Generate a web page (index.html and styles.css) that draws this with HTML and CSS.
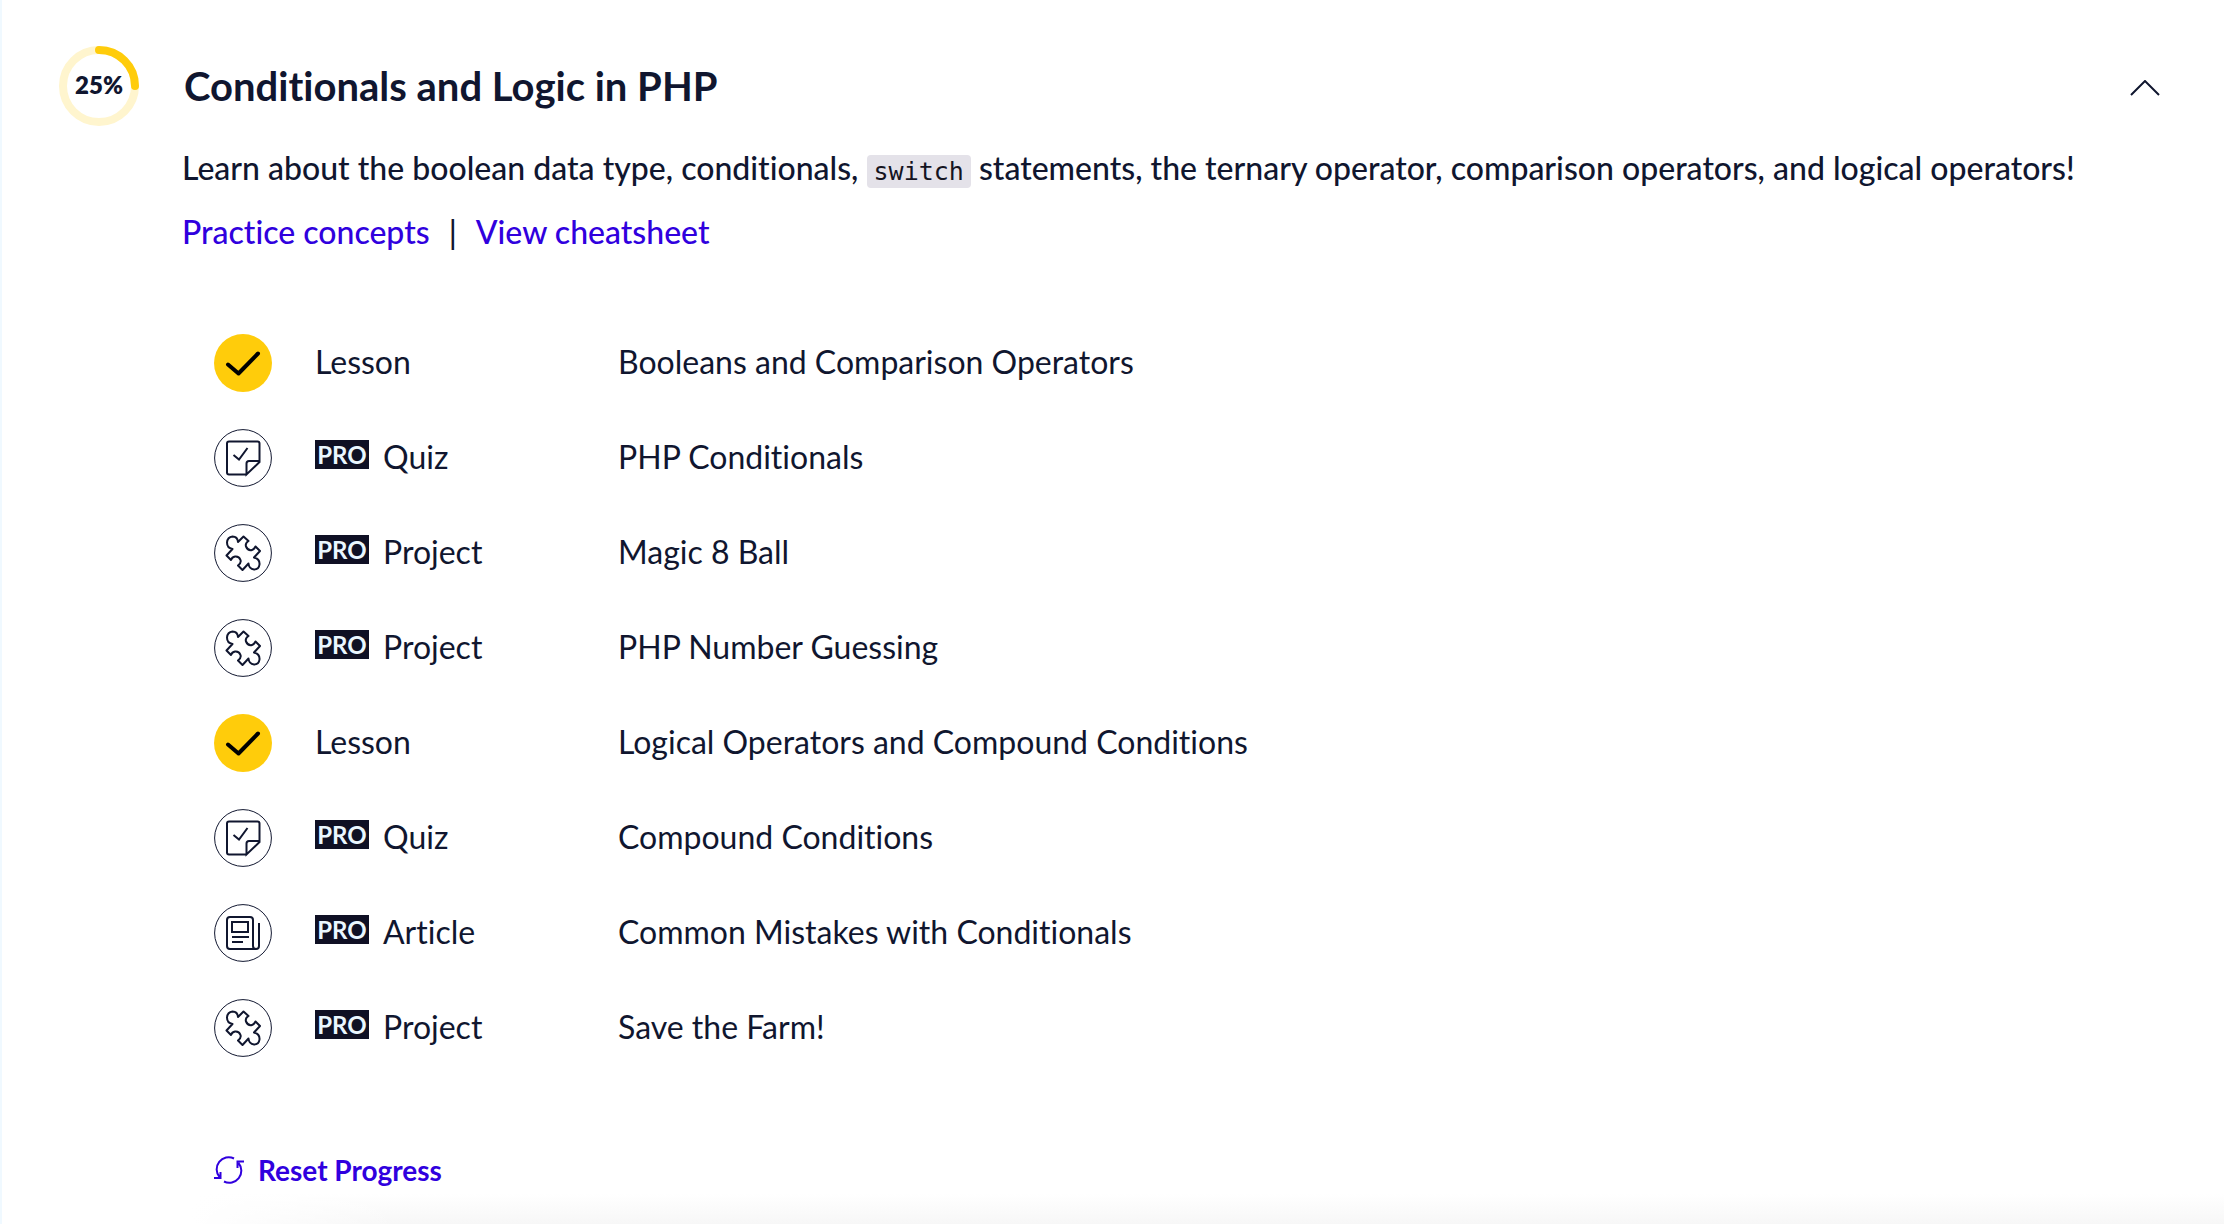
FILE: index.html
```html
<!DOCTYPE html>
<html lang="en">
<head>
<meta charset="utf-8">
<title>Conditionals and Logic in PHP</title>
<link rel="stylesheet" href="styles.css">
</head>
<body>
<svg class="sprite" aria-hidden="true">
  <symbol id="done" viewBox="0 0 58 58"><circle cx="29" cy="29" r="29" fill="#ffcc0b" stroke="none"/><path d="M14 30.500L24.500 39.500L44 19.500" fill="none" stroke="#000" stroke-width="4" stroke-linecap="round" stroke-linejoin="round"/></symbol>
  <symbol id="quiz" viewBox="0 0 58 58"><circle cx="29" cy="29" r="28.400"/><g stroke-width="2"><path d="M32.500 45.500H15Q13 45.500 13 43.500V14.500Q13 12.500 15 12.500H43.500Q45.500 12.500 45.500 14.500V33L32.500 45.500V34.500Q32.500 32 35 32H45.500"/><path d="M19.500 26L25 30.500L33.500 19"/></g></symbol>
  <symbol id="project" viewBox="0 0 58 58"><circle cx="29" cy="29" r="28.400"/><path stroke-width="2" stroke-linejoin="round" d="M24 18L29.500 12.500L34.500 17Q31 19 32 22.500Q34 27 38 26Q40 25.500 41.500 22.500L46 27L40 33.500Q46 35 45.500 40.500Q45 45.500 40 45.500Q35 45 34.500 39.500L28.500 46L24 41.500Q27.500 39 26.500 36Q25 32 21 32.500Q18 33 17 36L12.500 31.500L18.500 25Q13 24 13 18.500Q13.500 13 18.500 12.500Q23.500 12.500 24 18Z"/></symbol>
  <symbol id="article" viewBox="0 0 58 58"><circle cx="29" cy="29" r="28.400"/><g stroke-width="2"><path d="M42 45H16Q13 45 13 42V16Q13 13 16 13H36Q39 13 39 16V42Q39 45 42 45Q45 45 45 42V19"/><path d="M18 18H34V28H18ZM18 33H35M18 38H29"/></g></symbol>
</svg>
<main class="module">
  <header class="header">
    <div class="ring">
      <svg class="ring-art" viewBox="0 0 80 80" aria-hidden="true"><circle class="ring-track" cx="40" cy="40" r="36"/><path class="ring-value" d="M40 4A36 36 0 0 1 76 40"/></svg>
      <span class="ring-label">25%</span>
    </div>
    <h1 class="title">Conditionals and Logic in PHP</h1>
    <button class="toggle" aria-label="Collapse"><svg class="chevron" viewBox="0 0 30 16"><path d="M1 15L15 1L29 15"/></svg></button>
  </header>
  <div class="intro">
    <p class="description">Learn about the boolean data type, conditionals, <code class="code">switch</code> statements, the ternary operator, comparison operators, and logical operators!</p>
    <nav class="links"><a href="#practice">Practice concepts</a><span>|</span><a href="#cheatsheet">View cheatsheet</a></nav>
  </div>
  <ul class="list">
    <li class="row"><svg class="icon"><use href="#done"/></svg><span class="kind">Lesson</span><span>Booleans and Comparison Operators</span></li>
    <li class="row"><svg class="icon"><use href="#quiz"/></svg><span class="kind"><b class="pro">PRO</b>Quiz</span><span>PHP Conditionals</span></li>
    <li class="row"><svg class="icon"><use href="#project"/></svg><span class="kind"><b class="pro">PRO</b>Project</span><span>Magic 8 Ball</span></li>
    <li class="row"><svg class="icon"><use href="#project"/></svg><span class="kind"><b class="pro">PRO</b>Project</span><span>PHP Number Guessing</span></li>
    <li class="row"><svg class="icon"><use href="#done"/></svg><span class="kind">Lesson</span><span>Logical Operators and Compound Conditions</span></li>
    <li class="row"><svg class="icon"><use href="#quiz"/></svg><span class="kind"><b class="pro">PRO</b>Quiz</span><span>Compound Conditions</span></li>
    <li class="row"><svg class="icon"><use href="#article"/></svg><span class="kind"><b class="pro">PRO</b>Article</span><span>Common Mistakes with Conditionals</span></li>
    <li class="row"><svg class="icon"><use href="#project"/></svg><span class="kind"><b class="pro">PRO</b>Project</span><span>Save the Farm!</span></li>
  </ul>
  <button class="reset"><svg class="reset-icon" viewBox="0 0 30 30"><path d="M20 3.500A12 12 0 0 0 5.500 22M0 23H6.500V17M10 26.500A12 12 0 0 0 24.500 8M30 6.500H23.500V13"/></svg>Reset Progress</button>
  <div class="fade"></div>
</main>
</body>
</html>
```
FILE: styles.css
```css
* { box-sizing: border-box; }
body { margin: 0; background: #fff; color: #10162f; font-family: Lato, "Liberation Sans", sans-serif; font-size: 32px; line-height: 48px; font-variant-ligatures: none; }
.sprite { display: block; width: 0; height: 0; }
.module { display: flex; flex-direction: column; min-height: 100vh; border-left: 2px solid #f0f9ff; }
.header { display: flex; align-items: center; gap: 45px; padding: 46px 64px 0 57px; }
.ring { display: grid; place-items: center; width: 80px; height: 80px; }
.ring-art, .ring-label { grid-area: 1 / 1; }
.ring-art { width: 80px; height: 80px; fill: none; stroke-width: 8px; stroke-linecap: round; }
.ring-track { stroke: #fff5ce; }
.ring-value { stroke: #ffcc0b; }
.ring-label { padding-bottom: 2px; font-size: 24px; font-weight: 800; }
.title { flex: 1; margin: 0; font-size: 40px; font-weight: 700; }
.toggle { display: grid; margin-top: 4px; padding: 0; border: 0; background: none; color: inherit; }
.chevron { width: 30px; height: 16px; fill: none; stroke: currentColor; stroke-width: 2px; }
.intro { padding: 18px 64px 0 180px; font-weight: 500; }
.description { margin: 0; }
.code { padding: 2px 7px; border-radius: 4px; background: #e4e2e9; color: #15141f; font: 25px "DejaVu Sans Mono", monospace; }
.links { display: flex; gap: 19px; margin-top: 16px; }
.links a { color: #3000de; text-decoration: none; }
.list { margin: 59px 0 0; padding: 0 64px 0 212px; list-style: none; }
.row { display: grid; grid-template-columns: 58px 260px 1fr; column-gap: 43px; align-items: center; height: 95px; }
.row > span { padding-bottom: 2px; }
.icon { width: 58px; height: 58px; fill: none; stroke: #10162f; stroke-width: 1px; }
.kind { display: flex; align-items: center; gap: 14px; }
.pro { width: 54px; height: 29px; margin-bottom: 4px; background: #0f1024; color: #eaf7ff; font-size: 24px; line-height: 29px; text-align: center; }
.reset { display: flex; align-items: center; gap: 14px; align-self: flex-start; margin: 71px 0 0 212px; padding: 0; border: 0; background: none; color: #3000de; font: 700 28px/48px Lato, "Liberation Sans", sans-serif; font-variant-ligatures: none; }
.reset-icon { width: 30px; height: 30px; fill: none; stroke: currentColor; stroke-width: 2px; }
.fade { flex: 1; background: linear-gradient(90deg, #fff 190px, transparent 400px), linear-gradient(#fff, #f7f7f7); }
```
